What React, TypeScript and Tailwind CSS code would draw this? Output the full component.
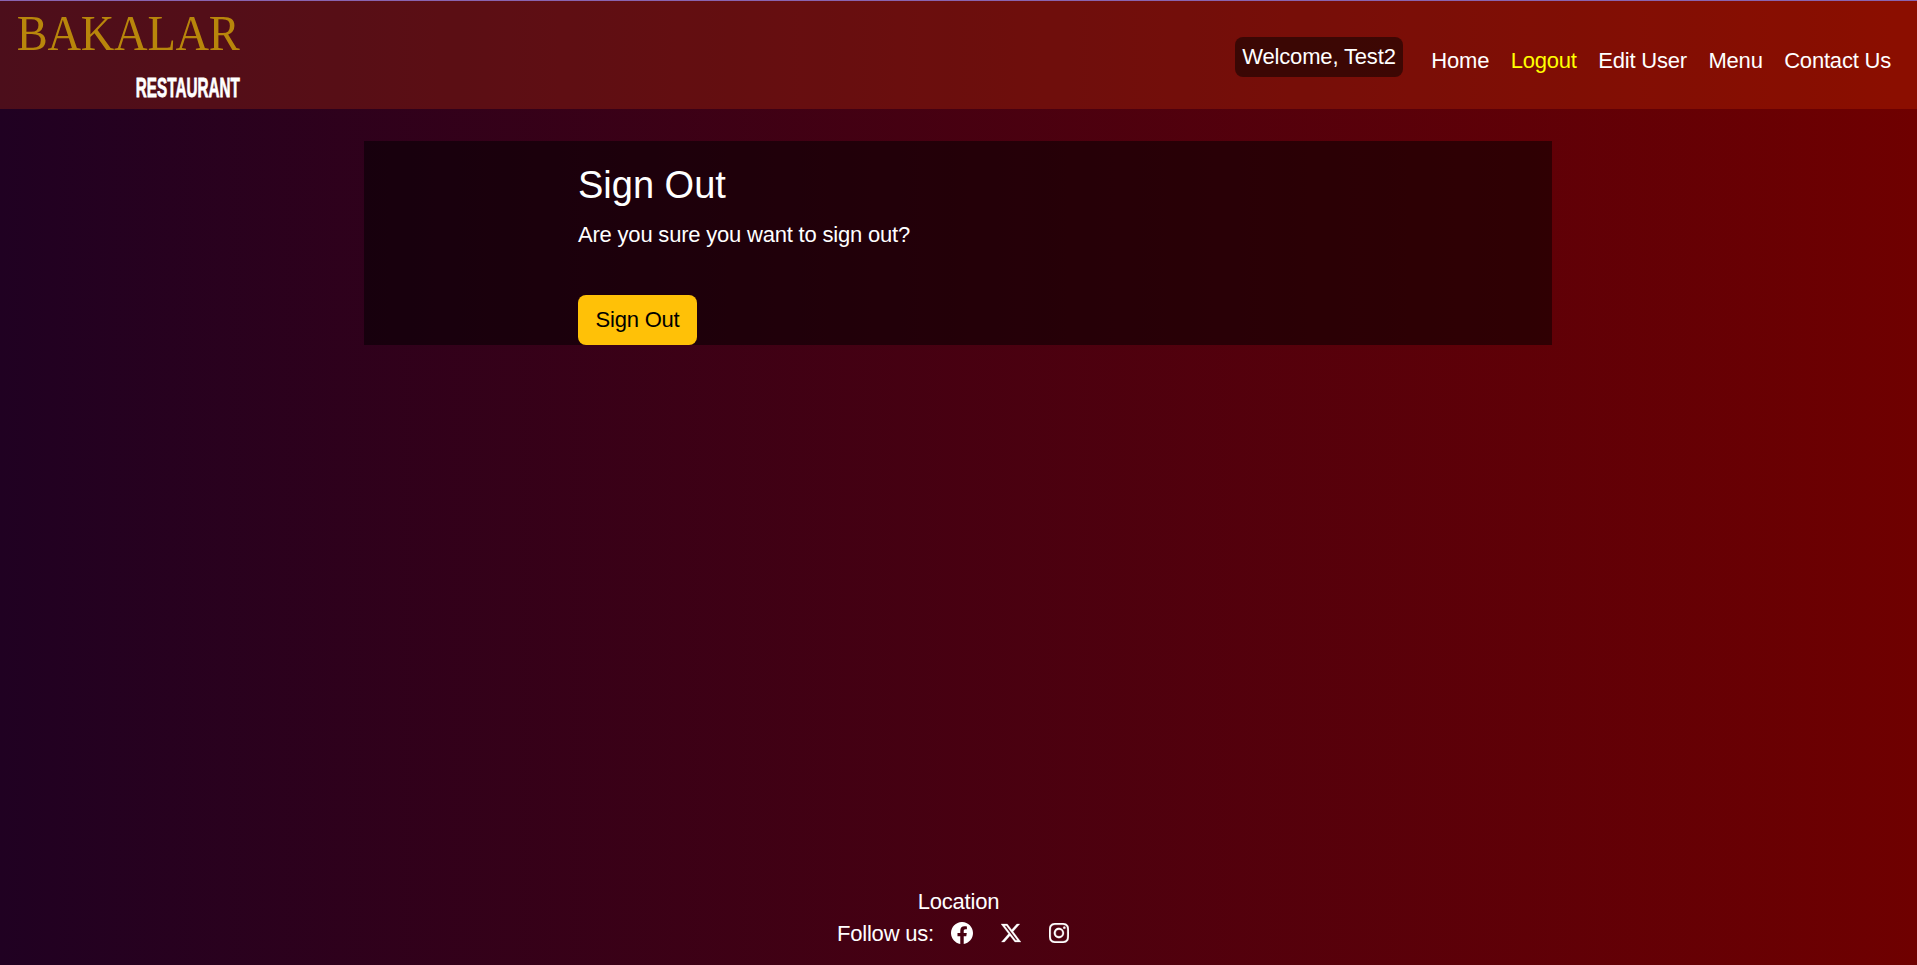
import { BsFacebook, BsTwitterX, BsInstagram } from "react-icons/bs";

const links = ["Home", "Logout", "Edit User", "Menu", "Contact Us"];

function Header() {
  return (
    <header className="flex h-[109px] items-start justify-between border-t border-[#8a64b0] bg-[#ff4500]/20 bg-clip-padding">
      <div className="flex w-[240px] flex-col items-end pt-[6px]">
        <span className="block origin-right scale-x-[0.93] font-['Liberation_Serif',serif] text-[50px] leading-[52px] tracking-[-0.3px] whitespace-nowrap text-[#b8860b]">
          BAKALAR
        </span>
        <span className="mt-[11px] block origin-right scale-x-[0.545] text-[28px] leading-[36px] font-bold tracking-normal whitespace-nowrap [-webkit-text-stroke:0.8px_white]">
          RESTAURANT
        </span>
      </div>
      <div className="flex pr-[26px]">
        <span className="mt-9 mr-[28px] h-10 rounded-lg bg-black/50 px-[7.5px] leading-[39px] tracking-[-0.15px]">Welcome, Test2</span>
        <nav className="mt-[43px] flex gap-[21.5px] leading-[33px]">
          {links.map((l) => (
            <a key={l} className={l === "Logout" ? "text-[#ffff00]" : "text-white"}>{l}</a>
          ))}
        </nav>
      </div>
    </header>
  );
}

export default function App() {
  return (
    <div className="flex h-screen flex-col bg-linear-to-r/srgb from-[#200122] to-[#6f0000] font-['Liberation_Sans',sans-serif] text-[22px] tracking-[-0.2px] text-white">
      <Header />
      <main className="mt-8 ml-[364px] h-[204px] w-[1188px] bg-black/50 pl-[214px]">
        <h1 className="pt-[20px] text-[38px] leading-[48px] tracking-normal">Sign Out</h1>
        <p className="mt-[9px] leading-[33px]">Are you sure you want to sign out?</p>
        <button className="mt-[44px] block h-[50px] w-[119px] rounded-lg bg-[#ffc107] pb-0.5 text-black">Sign Out</button>
      </main>
      <footer className="mt-auto flex flex-col items-center pb-[15px] leading-8">
        <div>Location</div>
        <div className="flex items-center pr-[11px]">
          <span>Follow us:</span>
          <BsFacebook className="mb-0.5 ml-[17px]" />
          <BsTwitterX className="mb-0.5 ml-[28px] size-5 stroke-white stroke-[0.2px]" />
          <BsInstagram className="mb-0.5 ml-[28px] size-5 stroke-white stroke-[0.2px]" />
        </div>
      </footer>
    </div>
  );
}
